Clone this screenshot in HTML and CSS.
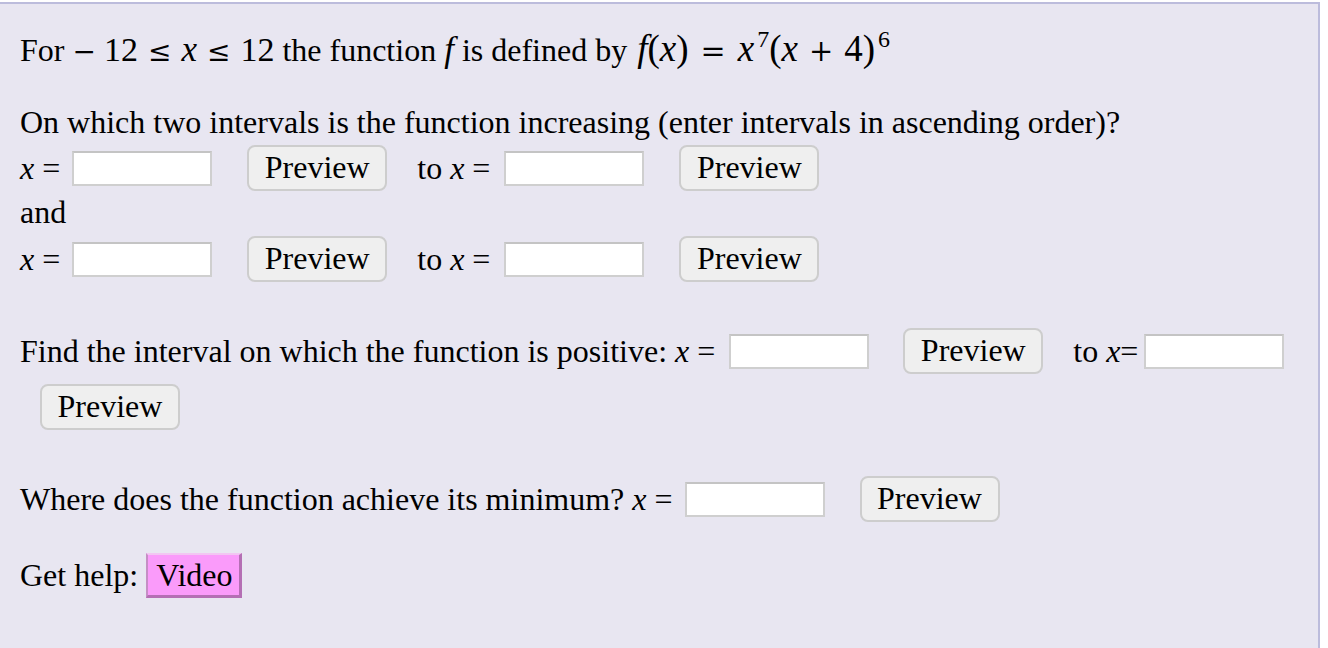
FILE: index.html
```html
<!DOCTYPE html>
<html>
<head>
<meta charset="utf-8">
<link rel="stylesheet" href="styles.css">
</head>
<body>
<div class="problem">
  <div class="line line1">For <span class="m"><span class="mb">−</span>12<span class="mr">≤</span><i class="mi">x</i><span class="mr">≤</span>12</span> the function <i class="mi">f</i> is defined by <span class="m m2"><i class="mi">f</i>(<i class="mi">x</i>)<span class="mr">=</span><i class="mi">x</i><sup>7</sup>(<i class="mi">x</i><span class="mb2">+</span>4)<sup>6</sup></span></div>

  <div class="line q2">On which two intervals is the function increasing (enter intervals in ascending order)?</div>

  <div class="row r1">
    <span class="lbl"><i>x</i> =</span>
    <span class="inp"></span>
    <span class="btn">Preview</span>
    <span class="lbl to">to <i>x</i> =</span>
    <span class="inp i2"></span>
    <span class="btn">Preview</span>
  </div>
  <div class="line and">and</div>
  <div class="row r2">
    <span class="lbl"><i>x</i> =</span>
    <span class="inp"></span>
    <span class="btn">Preview</span>
    <span class="lbl to">to <i>x</i> =</span>
    <span class="inp i2"></span>
    <span class="btn">Preview</span>
  </div>

  <div class="row r3">
    <span class="lbl">Find the interval on which the function is positive: <i>x</i> =</span>
    <span class="inp i3a"></span>
    <span class="btn">Preview</span>
    <span class="lbl to">to <i>x</i>=</span>
    <span class="inp i3"></span>
  </div>
  <div class="row r4">
    <span class="btn solo">Preview</span>
  </div>

  <div class="row r5">
    <span class="lbl">Where does the function achieve its minimum? <i>x</i> =</span>
    <span class="inp i5"></span>
    <span class="btn">Preview</span>
  </div>

  <div class="row r6">
    <span class="lbl">Get help:</span>
    <span class="video">Video</span>
  </div>
</div>
</body>
</html>
```

FILE: styles.css
```css
html, body {
  margin: 0;
  padding: 0;
  background: #ffffff;
}
body {
  font-family: "Liberation Serif", "Times New Roman", serif;
  font-size: 32px;
  color: #000;
}
.problem {
  box-sizing: border-box;
  width: 1320px;
  height: 646px;
  margin-top: 2px;
  padding: 0 20px;
  background: #e8e6f1;
  border-top: 2px solid #bcbcdc;
  border-right: 2px solid #bcbcdc;
  overflow: hidden;
}
.line {
  line-height: 37px;
  height: 37px;
  white-space: nowrap;
}
.line1 { margin-top: 26px; }
.m { font-family: "Liberation Serif", serif; font-size: 34px; }
.mi { font-family: "Liberation Serif", serif; font-style: italic; font-size: 35px; }
.mb { display: inline-block; font-family: "DejaVu Serif", serif; font-size: 28px; margin-right: 8px; }
.mb2 { display: inline-block; font-family: "DejaVu Serif", serif; font-size: 29px; margin: 0 11px; }
.mr { display: inline-block; font-family: "DejaVu Serif", serif; font-size: 28px; margin: 0 10px; }
.m2 { font-size: 37px; margin-left: 2px; }
.m2 .mi { font-size: 37px; }
.m2 .mr { font-size: 30px; margin: 0 12px; }
.line1 sup { font-size: 24px; vertical-align: 14px; line-height: 0; margin-left: 3px; }
.q2 { margin-top: 37px; }
.row {
  display: flex;
  align-items: center;
  height: 46px;
  white-space: nowrap;
}
.r1 { margin-top: 4px; }
.and { margin-top: 3px; }
.r2 { margin-top: 5px; }
.r3 { margin-top: 46px; }
.r4 { margin-top: 10px; }
.r5 { margin-top: 46px; }
.r6 { margin-top: 31px; height: 45px; }
.lbl { line-height: 37px; }
.to { margin-left: 30px; }
.inp {
  box-sizing: border-box;
  width: 140px;
  height: 35px;
  background: #fff;
  border: 2px solid #cfcfcf;
  border-top-color: #c4c4c4;
  margin-left: 12px;
}
.i2 { margin-left: 14px; }
.i3a { margin-left: 14px; }
.i3 { margin-left: 6px; }
.i5 { margin-left: 12px; }
.btn {
  box-sizing: border-box;
  width: 140px;
  height: 46px;
  line-height: 40px;
  text-align: center;
  background: #efefef;
  border: 2px solid #cdcdcd;
  border-radius: 8px;
  margin-left: 35px;
}
.i3a + .btn { margin-left: 34px; }
.solo { margin-left: 20px; }
.video {
  box-sizing: border-box;
  height: 45px;
  line-height: 40px;
  padding: 0 7px 0 8px;
  margin-left: 8px;
  background: #fa9bfa;
  border-top: 2px solid #f2c6f2;
  border-left: 2px solid #c58ec5;
  border-right: 3px solid #b46fb4;
  border-bottom: 3px solid #b46fb4;
}
```
